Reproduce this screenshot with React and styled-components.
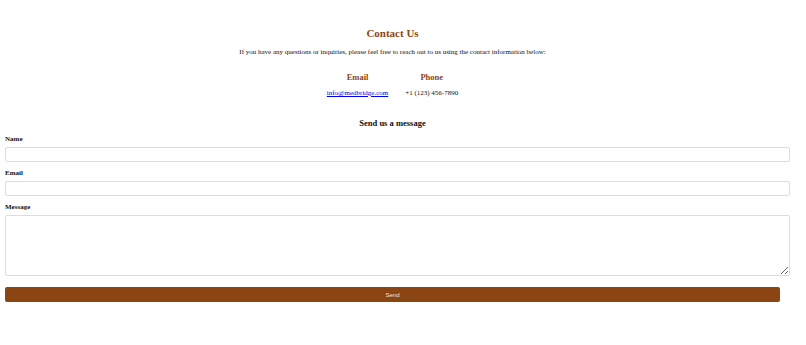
import React from "react";
import styled, { createGlobalStyle } from "styled-components";

const GlobalStyle = createGlobalStyle`
  body {
    margin: 0;
    background: #fff;
    font-family: "Liberation Serif", "Times New Roman", serif;
    color: #111;
  }
`;

const Page = styled.div`
  width: 775px;
  margin-left: 5px;
  padding-top: 27px;
`;

const Intro = styled.section`
  text-align: center;
`;

const Title = styled.h2`
  margin: 0;
  font-size: 11px;
  font-weight: bold;
  color: #8b4513;
  line-height: 13px;
`;

const Lead = styled.p`
  margin: 8px 0 0;
  font-size: 7px;
  line-height: 9px;
`;

const InfoRow = styled.div`
  display: flex;
  justify-content: center;
  gap: 17px;
  margin-top: 15px;
`;

const InfoColumn = styled.div`
  display: flex;
  flex-direction: column;
  align-items: center;
`;

const InfoTitle = styled.h4`
  margin: 0;
  font-size: 8.5px;
  line-height: 10px;
  color: #8b4513;
`;

const InfoValue = styled.p`
  margin: 7px 0 0;
  font-size: 7px;
  line-height: 9px;

  a {
    color: #0000ee;
  }
`;

const FormTitle = styled.h3`
  margin: 20px 0 0;
  text-align: center;
  font-size: 8.5px;
  line-height: 10px;
`;

const Form = styled.form`
  margin-top: 7px;
`;

const Field = styled.div`
  margin-bottom: 7px;
`;

const Label = styled.label`
  display: block;
  font-size: 7px;
  font-weight: bold;
  line-height: 9px;
  margin-bottom: 3px;
`;

const Input = styled.input`
  display: block;
  width: 100%;
  height: 5px;
  padding: 4px;
  border: 1px solid #dcdcdc;
  border-radius: 2px;
  font-size: 7px;
  outline: none;
`;

const TextArea = styled.textarea`
  display: block;
  width: 100%;
  height: 51px;
  padding: 4px;
  border: 1px solid #dcdcdc;
  border-radius: 2px;
  font-size: 7px;
  outline: none;
  resize: vertical;
`;

const SendButton = styled.button`
  display: block;
  width: 100%;
  height: 15px;
  margin-top: 11px;
  border: none;
  border-radius: 2px;
  background: #8b4513;
  color: #f3e7dc;
  font-family: "Liberation Sans", Arial, sans-serif;
  font-size: 6px;
`;

export default function App() {
  return (
    <>
      <GlobalStyle />
      <Page>
        <Intro>
          <Title>Contact Us</Title>
          <Lead>
            If you have any questions or inquiries, please feel free to reach
            out to us using the contact information below:
          </Lead>
          <InfoRow>
            <InfoColumn>
              <InfoTitle>Email</InfoTitle>
              <InfoValue>
                <a href="#">info@medbridge.com</a>
              </InfoValue>
            </InfoColumn>
            <InfoColumn>
              <InfoTitle>Phone</InfoTitle>
              <InfoValue>+1 (123) 456-7890</InfoValue>
            </InfoColumn>
          </InfoRow>
        </Intro>
        <FormTitle>Send us a message</FormTitle>
        <Form onSubmit={(e) => e.preventDefault()}>
          <Field>
            <Label htmlFor="name">Name</Label>
            <Input id="name" type="text" />
          </Field>
          <Field>
            <Label htmlFor="email">Email</Label>
            <Input id="email" type="email" />
          </Field>
          <Field>
            <Label htmlFor="message">Message</Label>
            <TextArea id="message" />
          </Field>
          <SendButton type="submit">Send</SendButton>
        </Form>
      </Page>
    </>
  );
}
